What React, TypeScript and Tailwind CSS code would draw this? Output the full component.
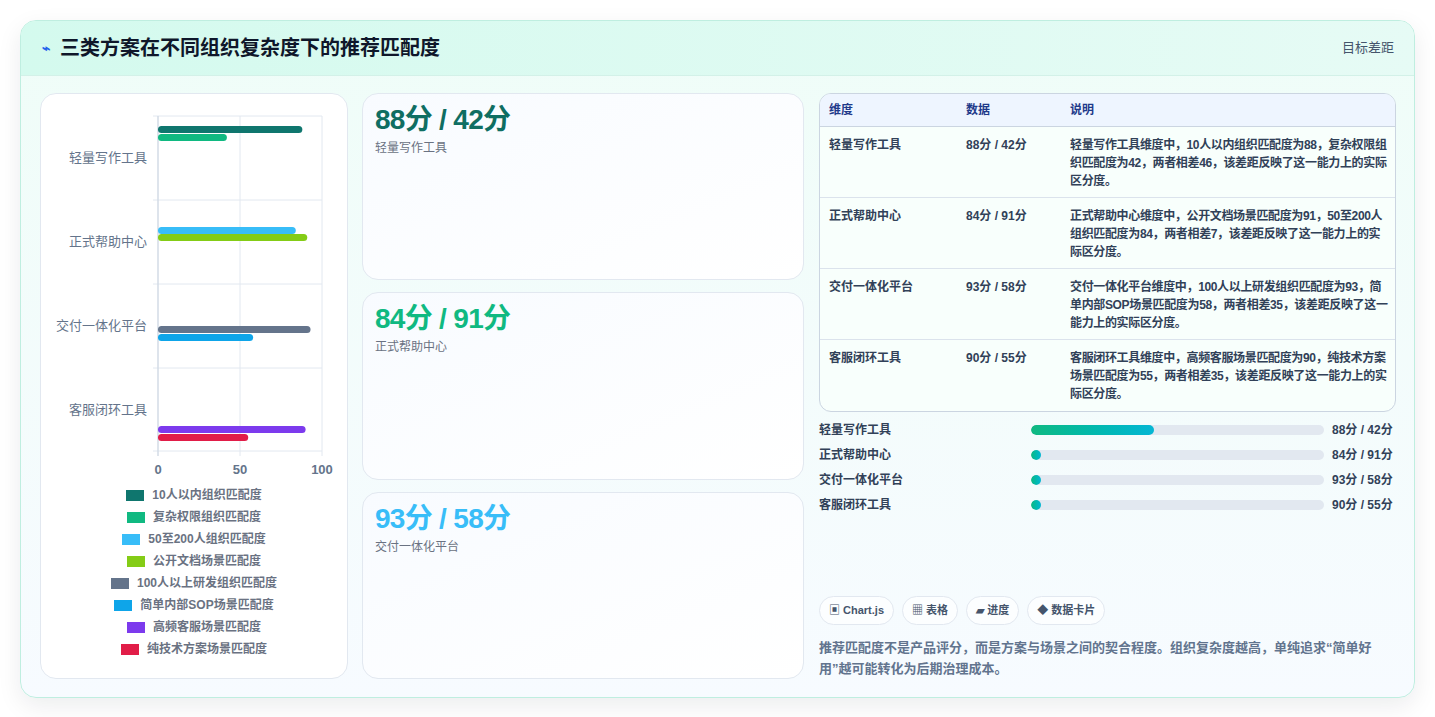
const font = { fontFamily: '"Liberation Sans", "Noto Sans CJK SC", sans-serif' }

const legend = [
  ['#0f766e', '10人以内组织匹配度'],
  ['#10b981', '复杂权限组织匹配度'],
  ['#38bdf8', '50至200人组织匹配度'],
  ['#84cc16', '公开文档场景匹配度'],
  ['#64748b', '100人以上研发组织匹配度'],
  ['#0ea5e9', '简单内部SOP场景匹配度'],
  ['#7c3aed', '高频客服场景匹配度'],
  ['#e11d48', '纯技术方案场景匹配度'],
]

const cats = ['轻量写作工具', '正式帮助中心', '交付一体化平台', '客服闭环工具']

// [value, y, color] in panel-local coords
const bars: [number, number, string][] = [
  [88, 32, '#0f766e'],
  [42, 40, '#10b981'],
  [84, 133, '#38bdf8'],
  [91, 140, '#84cc16'],
  [93, 232, '#64748b'],
  [58, 240, '#0ea5e9'],
  [90, 332, '#7c3aed'],
  [55, 340, '#e11d48'],
]

const rows = [
  ['轻量写作工具', '88分 / 42分', '轻量写作工具维度中，10人以内组织匹配度为88，复杂权限组织匹配度为42，两者相差46，该差距反映了这一能力上的实际区分度。'],
  ['正式帮助中心', '84分 / 91分', '正式帮助中心维度中，公开文档场景匹配度为91，50至200人组织匹配度为84，两者相差7，该差距反映了这一能力上的实际区分度。'],
  ['交付一体化平台', '93分 / 58分', '交付一体化平台维度中，100人以上研发组织匹配度为93，简单内部SOP场景匹配度为58，两者相差35，该差距反映了这一能力上的实际区分度。'],
  ['客服闭环工具', '90分 / 55分', '客服闭环工具维度中，高频客服场景匹配度为90，纯技术方案场景匹配度为55，两者相差35，该差距反映了这一能力上的实际区分度。'],
]

const cards = [
  ['88分 / 42分', '轻量写作工具', 'text-[#0f6e62]'],
  ['84分 / 91分', '正式帮助中心', 'text-[#10b981]'],
  ['93分 / 58分', '交付一体化平台', 'text-[#38bdf8]'],
]

function Chart() {
  const x0 = 117
  const k = 1.64
  return (
    <svg width="307" height="390" className="block">
      {[117, 199, 281].map((x) => (
        <line key={x} x1={x} x2={x} y1={22} y2={362} stroke="#e2e8f0" />
      ))}
      {[22, 106, 190, 274, 357].map((y) => (
        <line key={y} x1={112} x2={281} y1={y} y2={y} stroke="#e2e8f0" />
      ))}
      <line x1={117} x2={117} y1={22} y2={362} stroke="#cbd5e1" />
      {bars.map(([v, y, c], i) => (
        <rect key={i} x={x0} y={y} width={v * k} height={7} rx={3.5} fill={c} />
      ))}
      {cats.map((c, i) => (
        <text key={c} x={106} y={68 + i * 84} textAnchor="end" fontSize="13" fill="#64748b" style={font}>
          {c}
        </text>
      ))}
      {[['0', 117], ['50', 199], ['100', 281]].map(([t, x]) => (
        <text key={t} x={x} y={380} textAnchor="middle" fontSize="13" fontWeight="bold" fill="#64748b" style={font}>
          {t}
        </text>
      ))}
    </svg>
  )
}

export default function App() {
  return (
    <div className="min-h-screen bg-white p-5" style={font}>
      <div className="rounded-2xl border border-[#bfeee0] bg-gradient-to-b from-[#effdf8] to-[#f7fbff] shadow-[0_8px_24px_rgba(15,23,42,0.08)] overflow-hidden h-[678px] flex flex-col">
        <div className="h-[55px] flex items-center justify-between pl-[21px] pr-5 bg-gradient-to-r from-[#d4faee] to-[#e6fbf5] border-b border-[#d3f1e8]">
          <div className="flex items-center gap-[10px]">
            <span className="text-[#2563eb] text-sm font-bold">⌁</span>
            <h1 className="text-[20px] font-bold text-[#0f172a]">三类方案在不同组织复杂度下的推荐匹配度</h1>
          </div>
          <span className="text-[13px] text-slate-600">目标差距</span>
        </div>
        <div className="flex-1 flex gap-[14px] pt-[17px] pb-[18px] pl-[19px] pr-[18px]">
          <div className="w-[308px] rounded-2xl border border-[#e2e8f0] bg-white flex flex-col">
            <Chart />
            <div className="flex flex-col items-center gap-[6px] mt-[3px]">
              {legend.map(([c, t]) => (
                <div key={t} className="flex items-center gap-2 text-[12px] font-bold text-gray-500 leading-[16px]">
                  <span className="w-[18px] h-[11px]" style={{ background: c }} />
                  {t}
                </div>
              ))}
            </div>
          </div>
          <div className="w-[442px] flex flex-col gap-[12px]">
            {cards.map(([v, l, c]) => (
              <div key={l} className="flex-1 rounded-2xl border border-[#e2e8f0] bg-gradient-to-br from-[#f8fbff] to-white px-[12px] pt-[9px]">
                <div className={`text-[28px] font-bold leading-[34px] tracking-tight ${c}`}>{v}</div>
                <div className="text-[12px] text-gray-500 mt-0.5">{l}</div>
              </div>
            ))}
          </div>
          <div className="flex-1 flex flex-col pl-[1px]">
            <div className="rounded-xl border border-[#cbd5e1] overflow-hidden bg-[#f8fffc]">
              <div className="grid grid-cols-[137px_104px_1fr] h-[33px] items-center px-[9px] bg-[#eef5ff] border-b border-[#cbd5e1] text-[12px] font-bold text-[#1e3a8a]">
                <span>维度</span>
                <span>数据</span>
                <span>说明</span>
              </div>
              {rows.map((r, i) => (
                <div key={i} className={`grid grid-cols-[137px_104px_1fr] pl-[9px] pr-[6px] pt-[9px] pb-[9px] h-[71px] text-[12px] font-semibold text-slate-700 leading-[18px] ${i < 3 ? 'border-b border-[#dbe3ec]' : ''}`}>
                  <span>{r[0]}</span>
                  <span>{r[1]}</span>
                  <span className="tracking-[-0.35px]">{r[2]}</span>
                </div>
              ))}
            </div>
            <div className="flex flex-col gap-[11px] mt-[11px]">
              {rows.map((r, i) => (
                <div key={i} className="flex items-center h-[14px] text-[12px] font-semibold text-slate-700">
                  <span className="w-[212px]">{r[0]}</span>
                  <div className="w-[293px] h-[10px] rounded-full bg-[#e2e8f0] overflow-hidden">
                    <div className="h-full rounded-full bg-gradient-to-r from-[#10b981] to-[#06b6d4]" style={{ width: i === 0 ? '42%' : '10px' }} />
                  </div>
                  <span className="ml-2">{r[1]}</span>
                </div>
              ))}
            </div>
            <div className="flex-1" />
            <div className="flex gap-2 mb-[12px]">
              {['▣ Chart.js', '▦ 表格', '▰ 进度', '◆ 数据卡片'].map((t) => (
                <span key={t} className="h-[29px] px-[9px] flex items-center rounded-full border border-[#e2e8f0] bg-white/70 text-[11px] font-semibold text-slate-600">
                  {t}
                </span>
              ))}
            </div>
            <p className="text-[13px] font-semibold text-slate-500 leading-[21px] pr-[20px]">
              推荐匹配度不是产品评分，而是方案与场景之间的契合程度。组织复杂度越高，单纯追求“简单好用”越可能转化为后期治理成本。
            </p>
          </div>
        </div>
      </div>
    </div>
  )
}
